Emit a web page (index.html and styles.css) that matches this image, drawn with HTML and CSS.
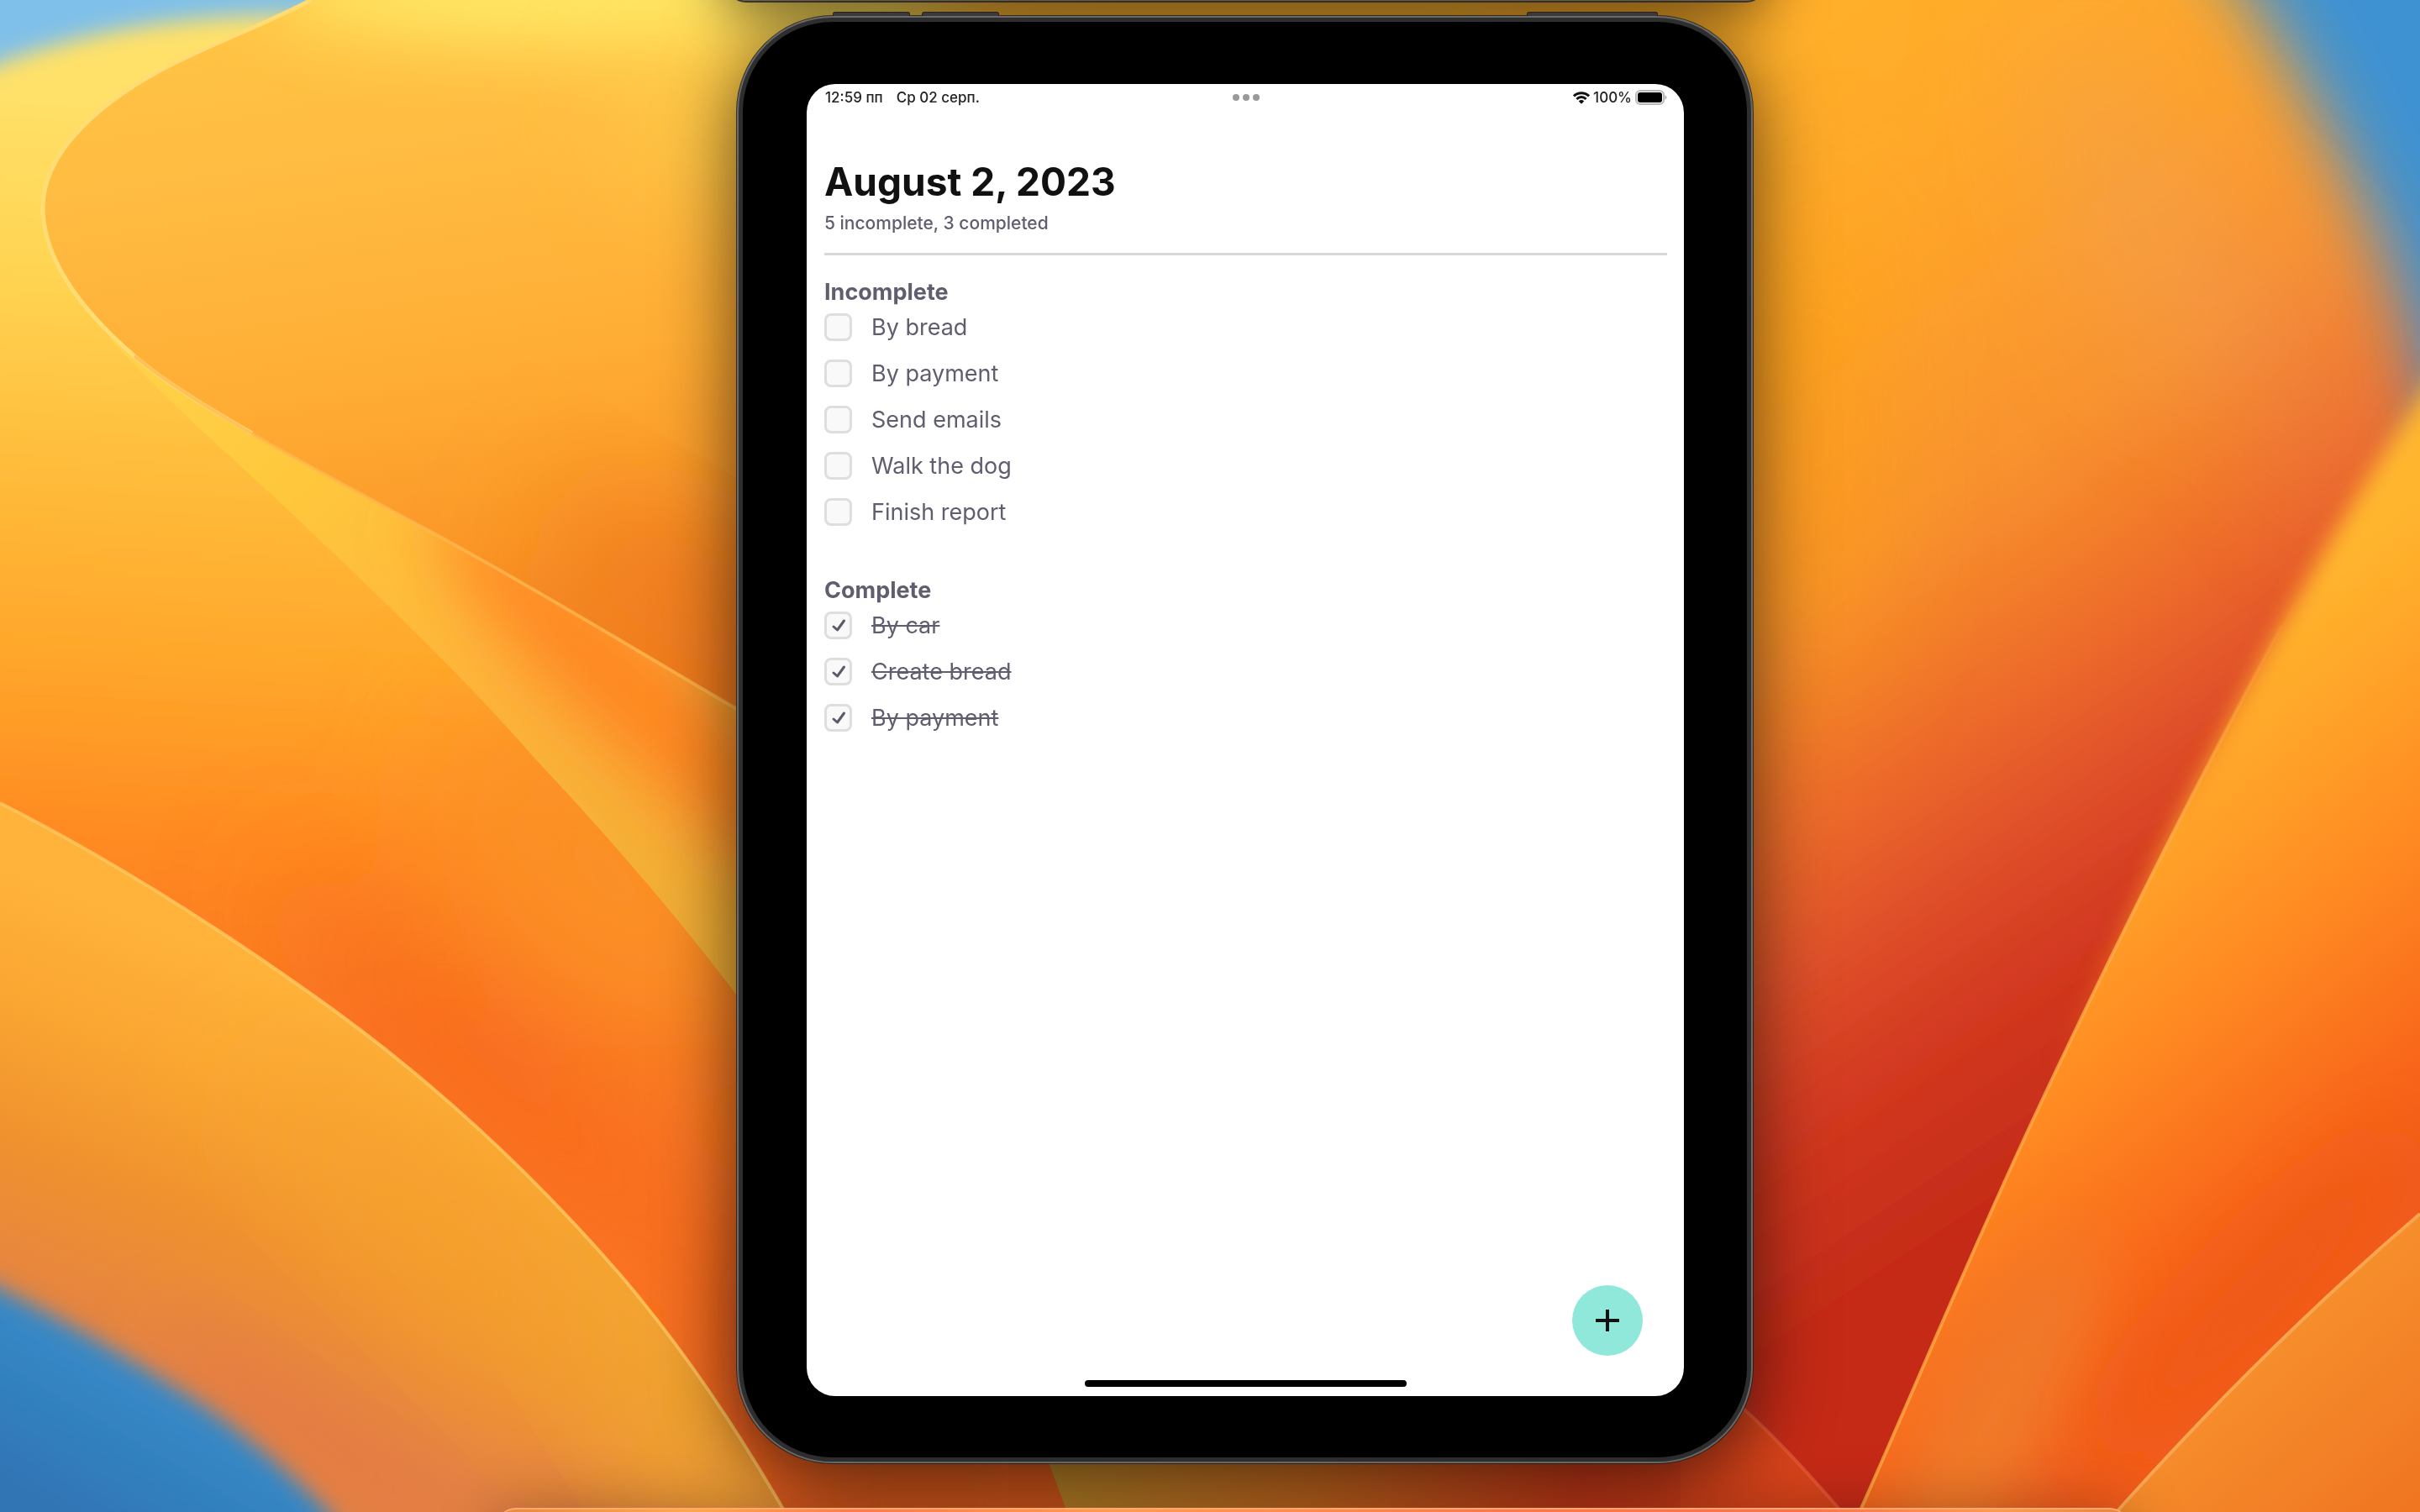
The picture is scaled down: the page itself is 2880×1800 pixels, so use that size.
FILE: index.html
```html
<!DOCTYPE html>
<html lang="en">
<head>
<meta charset="utf-8">
<title>August 2, 2023</title>
<link rel="stylesheet" href="styles.css">
</head>
<body>
<svg class="wallpaper" viewBox="0 0 2880 1800" preserveAspectRatio="none" aria-hidden="true">
  <defs>
    <filter id="b12" x="-20%" y="-20%" width="140%" height="140%"><feGaussianBlur stdDeviation="13"/></filter>
    <filter id="b40" x="-60%" y="-60%" width="220%" height="220%"><feGaussianBlur stdDeviation="42"/></filter>
    <filter id="b80" x="-60%" y="-60%" width="220%" height="220%"><feGaussianBlur stdDeviation="75"/></filter>
    <linearGradient id="gLeft" x1="0" y1="100" x2="-60" y2="1200" gradientUnits="userSpaceOnUse">
      <stop offset="0" stop-color="#ffe169"/><stop offset=".2" stop-color="#ffd452"/><stop offset=".42" stop-color="#ffbb3a"/>
      <stop offset=".62" stop-color="#ffa62a"/><stop offset=".8" stop-color="#ff8b22"/><stop offset="1" stop-color="#fa7823"/>
    </linearGradient>
    <linearGradient id="gInner" x1="420" y1="0" x2="560" y2="900" gradientUnits="userSpaceOnUse">
      <stop offset="0" stop-color="#ffc444"/><stop offset=".2" stop-color="#ffbc42"/><stop offset=".5" stop-color="#ffad34"/>
      <stop offset=".72" stop-color="#fb9828"/><stop offset=".95" stop-color="#f07c1e"/>
    </linearGradient>
    <linearGradient id="gWedge" x1="140" y1="400" x2="900" y2="1100" gradientUnits="userSpaceOnUse">
      <stop offset="0" stop-color="#ffd34c"/><stop offset=".25" stop-color="#ffc83c"/><stop offset=".6" stop-color="#fdb43c"/><stop offset="1" stop-color="#f0ac34"/>
    </linearGradient>
    <linearGradient id="gLow" x1="330" y1="1150" x2="150" y2="1620" gradientUnits="userSpaceOnUse">
      <stop offset="0" stop-color="#ffb33a"/><stop offset=".3" stop-color="#faa632"/><stop offset=".6" stop-color="#f0922e"/><stop offset="1" stop-color="#e48244"/>
    </linearGradient>
    <linearGradient id="gRight" x1="2100" y1="100" x2="2815" y2="1179" gradientUnits="userSpaceOnUse">
      <stop offset="0" stop-color="#ffaf2a"/><stop offset=".2" stop-color="#fea42c"/><stop offset=".42" stop-color="#f8922e"/>
      <stop offset=".56" stop-color="#f0722a"/><stop offset=".7" stop-color="#e0502a"/><stop offset=".82" stop-color="#d23820"/><stop offset=".97" stop-color="#c52c18"/>
    </linearGradient>
    <linearGradient id="gEast" x1="2470" y1="900" x2="2860" y2="1400" gradientUnits="userSpaceOnUse">
      <stop offset="0" stop-color="#ffb62e"/><stop offset=".2" stop-color="#ffa62a"/><stop offset=".5" stop-color="#ff8a22"/><stop offset=".85" stop-color="#f8661a"/><stop offset="1" stop-color="#f25c1c"/>
    </linearGradient>
    <linearGradient id="gSouthEast" x1="2650" y1="1560" x2="2850" y2="1800" gradientUnits="userSpaceOnUse">
      <stop offset="0" stop-color="#f8942e"/><stop offset="1" stop-color="#f07622"/>
    </linearGradient>
    <linearGradient id="gBottom" x1="1250" y1="0" x2="2150" y2="0" gradientUnits="userSpaceOnUse">
      <stop offset="0" stop-color="#c08828"/><stop offset=".35" stop-color="#cc6a1e"/><stop offset=".7" stop-color="#cc3a18"/><stop offset="1" stop-color="#d8431a"/>
    </linearGradient>
    <linearGradient id="gBlue" x1="200" y1="1560" x2="60" y2="1800" gradientUnits="userSpaceOnUse">
      <stop offset="0" stop-color="#4090cc"/><stop offset=".5" stop-color="#3484c2"/><stop offset="1" stop-color="#3074b4"/>
    </linearGradient>
    <linearGradient id="fadeIn" x1="0" y1="700" x2="0" y2="1000" gradientUnits="userSpaceOnUse">
      <stop offset="0" stop-color="#000"/><stop offset="1" stop-color="#fff"/>
    </linearGradient>
    <linearGradient id="fadeOut" x1="0" y1="1000" x2="0" y2="1280" gradientUnits="userSpaceOnUse">
      <stop offset="0" stop-color="#fff"/><stop offset="1" stop-color="#000"/>
    </linearGradient>
    <mask id="mIn" maskUnits="userSpaceOnUse" x="2000" y="0" width="900" height="1800"><rect x="2000" width="900" height="1800" fill="url(#fadeIn)"/></mask>
    <mask id="mOut" maskUnits="userSpaceOnUse" x="2000" y="0" width="900" height="1800"><rect x="2000" width="900" height="1800" fill="url(#fadeOut)"/></mask>
    <clipPath id="cInner"><path d="M370 0C310 32 250 52 190 84C110 128 51 185 51 247C51 310 100 372 160 424C240 490 390 566 520 637C650 708 770 782 877 844L1500 1200V0Z"/></clipPath>
    <clipPath id="cWedge"><path d="M51 247C51 310 100 372 160 424C240 490 390 566 520 637C650 708 770 782 877 844L1000 920V1350L877 1185C800 1083 720 992 634 900C560 815 470 728 392 654C310 573 220 500 135 408Z"/></clipPath>
    <clipPath id="cLow"><path d="M0 956C130 1022 250 1098 367 1181C500 1274 620 1382 735 1514C815 1607 880 1706 934 1800H0Z"/></clipPath>
    <clipPath id="cEast"><path d="M2960 355C2880 470 2800 590 2714 746C2600 960 2510 1140 2426 1319C2350 1480 2280 1650 2213 1800H2960Z"/></clipPath>
  </defs>
  <rect width="2880" height="1800" fill="#7fc0ea"/>
  <path d="M-80 110C80 30 250 10 440 20H1400V1900H-80Z" fill="url(#gLeft)" filter="url(#b12)"/>
  <g filter="url(#b80)">
    <ellipse cx="720" cy="1040" rx="230" ry="120" fill="#fb9028" transform="rotate(45 720 1040)"/>
    <ellipse cx="600" cy="1290" rx="360" ry="45" fill="#f8641e" transform="rotate(43 600 1290)"/>
    <ellipse cx="950" cy="1650" rx="90" ry="220" fill="#dc501c"/>
  </g>
  <g clip-path="url(#cWedge)">
    <rect width="1100" height="1400" fill="url(#gWedge)"/>
    <ellipse cx="800" cy="868" rx="380" ry="62" fill="#ff8420" filter="url(#b40)" transform="rotate(43 800 868)"/>
  </g>
  <rect x="1300" width="900" height="300" fill="#ffb42e"/>
  <g clip-path="url(#cInner)">
    <rect width="1500" height="1300" fill="url(#gInner)"/>
    <ellipse cx="780" cy="-10" rx="460" ry="66" fill="#ffe866" filter="url(#b40)"/>
    <ellipse cx="1000" cy="130" rx="260" ry="90" fill="#ffd44c" filter="url(#b80)" opacity=".8"/>
    <ellipse cx="1400" cy="20" rx="300" ry="90" fill="#ffb42e" filter="url(#b40)"/>
    <ellipse cx="830" cy="720" rx="200" ry="70" fill="#ee781c" filter="url(#b80)" transform="rotate(30 830 720)"/>
  </g>
  <path d="M370 0C310 32 250 52 190 84C110 128 51 185 51 247C51 310 100 372 160 424C190 450 240 482 300 516" fill="none" stroke="#ffdc74" stroke-width="5"/>
  <path d="M160 424C240 490 390 566 520 637C650 708 770 782 877 844" fill="none" stroke="#ffb850" stroke-width="4" opacity=".75"/>
  <path d="M960 1660H1240L1275 1900H960Z" fill="#dc5a1c" filter="url(#b40)"/>
  <path d="M1232 1700H2100V1900H1300L1270 1800Z" fill="url(#gBottom)"/>
  <rect x="2030" width="850" height="1700" fill="#3f92d2"/>
  <path d="M1800 -200H2530C2730 40 2840 260 2890 480L3000 900V1900H2060L1800 700Z" fill="url(#gRight)" filter="url(#b40)"/>
  <g filter="url(#b80)">
    <ellipse cx="2540" cy="240" rx="60" ry="240" fill="#f2a05c" transform="rotate(-22 2540 240)" opacity=".6"/>
    <ellipse cx="2740" cy="440" rx="24" ry="190" fill="#e87c62" transform="rotate(-18 2740 440)" opacity=".85"/>
    <ellipse cx="2160" cy="520" rx="50" ry="300" fill="#ffa01c" opacity=".5"/>
  </g>
  <path d="M2060 1664C2105 1702 2150 1752 2192 1800H2000V1664Z" fill="#d8431a"/>
  <path d="M1226 1730H2000V1800H1270Z" fill="url(#gBottom)"/>
  <path d="M1200 1730H1244L1270 1800H1200Z" fill="#dc5a1c"/>
  <path d="M2060 1664C2105 1702 2150 1752 2192 1800" fill="none" stroke="#e85c38" stroke-width="4" opacity=".7"/>
  <g mask="url(#mOut)">
    <path d="M2960 355C2880 470 2800 590 2714 746C2600 960 2510 1140 2426 1319L3200 1319V355Z" fill="url(#gEast)" filter="url(#b12)"/>
  </g>
  <g clip-path="url(#cEast)">
    <g mask="url(#mIn)">
      <rect x="2100" y="300" width="800" height="1500" fill="url(#gEast)"/>
      <ellipse cx="2370" cy="1690" rx="240" ry="70" fill="#f07a2a" filter="url(#b40)" transform="rotate(-64 2370 1690)"/>
      <ellipse cx="2690" cy="1540" rx="260" ry="60" fill="#f05a18" filter="url(#b40)" transform="rotate(-45 2690 1540)"/>
    </g>
  </g>
  <path mask="url(#mIn)" d="M2714 746C2600 960 2510 1140 2426 1319C2350 1480 2280 1650 2213 1800" fill="none" stroke="#ffb04a" stroke-width="4" opacity=".75"/>
  <path d="M2880 1445C2750 1556 2630 1675 2510 1810H2880Z" fill="url(#gSouthEast)"/>
  <path d="M2880 1445C2750 1556 2630 1675 2510 1810" fill="none" stroke="#f9a650" stroke-width="4"/>
  <g clip-path="url(#cLow)">
    <rect y="900" width="1000" height="900" fill="url(#gLow)"/>
    <ellipse cx="790" cy="1660" rx="260" ry="70" fill="#f0a830" filter="url(#b80)" transform="rotate(58 790 1660)"/>
    <ellipse cx="520" cy="1480" rx="280" ry="70" fill="#f5a02e" filter="url(#b80)" transform="rotate(45 520 1480)"/>
    <ellipse cx="390" cy="1720" rx="240" ry="36" fill="#e47a42" filter="url(#b40)" transform="rotate(36 390 1720)"/>
    <path d="M-60 1505C60 1560 160 1620 245 1675C310 1722 350 1758 400 1810L380 1900H-60Z" fill="url(#gBlue)" filter="url(#b12)"/>
  </g>
  <path d="M0 956C130 1022 250 1098 367 1181C500 1274 620 1382 735 1514C815 1607 880 1706 934 1800" fill="none" stroke="#ffc860" stroke-width="4" opacity=".8"/>
</svg>
<div class="desktop">
  <div class="upper-device"></div>
  <main class="tablet">
    <span class="key key-volume-up"></span><span class="key key-volume-down"></span><span class="key key-power"></span>
    <div class="screen">
      <header class="status">
        <div class="status-side"><span>12:59 пп</span><span>Ср 02 серп.</span></div>
        <div class="dots"><i></i><i></i><i></i></div>
        <div class="status-side status-end">
          <svg class="wifi" viewBox="0 0 20 15" aria-label="Wi-Fi"><g fill="none" stroke="#111" stroke-width="3"><path d="M1 5.4C6 .4 14 .4 19 5.4"/><path d="M4.4 9C7.6 5.8 12.4 5.8 15.6 9"/></g><path d="M6.8 11.4C8.7 9.6 11.3 9.6 13.2 11.4L10 14.8Z" fill="#111"/></svg>
          <span>100%</span>
          <svg class="battery" viewBox="0 0 38 18" aria-label="Battery full"><rect x="1" y="1" width="33" height="16" rx="5" fill="none" stroke="#b9b9b9" stroke-width="2"/><rect x="3" y="3" width="29" height="12" rx="3"/><path d="M35.500 6.500C38 7 38 11 35.500 11.500Z" fill="#aaa"/></svg>
        </div>
      </header>
      <div class="content">
        <h1>August 2, 2023</h1>
        <p class="summary">5 incomplete, 3 completed</p>
        <hr>
        <section>
          <h2>Incomplete</h2>
          <ul>
            <li><label><span class="box"><input type="checkbox"></span>By bread</label></li>
            <li><label><span class="box"><input type="checkbox"></span>By payment</label></li>
            <li><label><span class="box"><input type="checkbox"></span>Send emails</label></li>
            <li><label><span class="box"><input type="checkbox"></span>Walk the dog</label></li>
            <li><label><span class="box"><input type="checkbox"></span>Finish report</label></li>
          </ul>
        </section>
        <section>
          <h2>Complete</h2>
          <ul class="done">
            <li><label><span class="box"><input type="checkbox" checked><svg viewBox="0 0 33 33"><path d="M11 18L15.500 22L23.500 11"/></svg></span><s>By car</s></label></li>
            <li><label><span class="box"><input type="checkbox" checked><svg viewBox="0 0 33 33"><path d="M11 18L15.500 22L23.500 11"/></svg></span><s>Create bread</s></label></li>
            <li><label><span class="box"><input type="checkbox" checked><svg viewBox="0 0 33 33"><path d="M11 18L15.500 22L23.500 11"/></svg></span><s>By payment</s></label></li>
          </ul>
        </section>
      </div>
      <button class="add" type="button" aria-label="Add task"><svg viewBox="0 0 28 28"><path d="M14 1V27M0 14H28"/></svg></button>
      <div class="home-bar"></div>
    </div>
  </main>
  <div class="lower-window"></div>
</div>
</body>
</html>
```
FILE: styles.css
```css
* { box-sizing: border-box; }

body {
  margin: 0;
  font-family: "Inter", "Liberation Sans", sans-serif;
  color: #605e6e;
}

.wallpaper {
  position: absolute;
  inset: 0;
  width: 100%;
  height: 100%;
}

.desktop {
  position: relative;
  display: grid;
  grid-template-columns: 877fr 1209fr 794fr;
  align-items: start;
  min-height: 100vh;
  padding-top: 19px;
  overflow: hidden;
}

.upper-device {
  position: absolute;
  top: -200px;
  left: 30%;
  width: 43%;
  height: 203px;
  border-bottom: 2px solid #3a3632;
  border-radius: 0 0 24px 24px;
  background: #77674a;
  box-shadow: 0 10px 70px rgba(0, 0, 0, .6);
}

.tablet {
  position: relative;
  grid-column: 2;
  padding: 74px 75px 73px 76px;
  border: 7px solid #2e2e2e;
  border-radius: 114px;
  background: #000;
  box-shadow: 0 0 0 1px rgba(30, 26, 22, .8), 0 20px 90px rgba(0, 0, 0, .65);
}

.tablet::before {
  content: "";
  position: absolute;
  inset: -7px;
  border: 2px solid #68686a;
  border-radius: 114px;
}

.key {
  position: absolute;
  top: -12px;
  width: 92px;
  height: 5px;
  border: 1px solid #2a2016;
  border-bottom: 0;
  border-radius: 3px 3px 0 0;
  background: #3a3a3c;
}

.key-volume-up { left: 107px; }
.key-volume-down { left: 213px; }
.key-power { right: 106px; width: 156px; }

.screen {
  position: relative;
  display: flex;
  flex-direction: column;
  aspect-ratio: 1044 / 1562;
  border-radius: 34px;
  background: #fff;
}

.status {
  display: grid;
  grid-template-columns: 1fr auto 1fr;
  align-items: center;
  height: 32px;
  padding: 0 20px 0 22px;
  font-size: 17px;
  font-weight: 500;
  color: #222;
}

.status-side {
  display: flex;
  align-items: center;
  gap: 16px;
}

.status-end {
  justify-content: flex-end;
  gap: 4px;
}

.wifi { width: 20px; height: 15px; }
.battery { width: 38px; height: 18px; }

.dots { display: flex; gap: 4px; }

.dots i {
  width: 8px;
  height: 8px;
  border-radius: 50%;
  background: #999;
}

.content { padding: 56px 20px 0 21px; }

h1 {
  margin: 0 0 8px;
  font-size: 46px;
  line-height: 56px;
  font-weight: 700;
  color: #111;
}

.summary {
  margin: 0;
  font-size: 21px;
  line-height: 28px;
  font-weight: 500;
}

hr {
  height: 3px;
  margin: 21px 0 28px;
  border: 0;
  background: #d8d8d8;
}

section + section { margin-top: 61px; }

h2 {
  margin: 0 0 9px;
  font-size: 27px;
  line-height: 32px;
  font-weight: 700;
}

ul {
  display: grid;
  gap: 22px;
  margin: 0;
  padding: 0;
  list-style: none;
}

li { height: 33px; }

label {
  display: inline-flex;
  align-items: center;
  gap: 23px;
  font-size: 27px;
  line-height: 33px;
  font-weight: 400;
}

s { text-decoration-thickness: 2px; }

.box { display: grid; }

.box > * { grid-area: 1 / 1; }

input {
  appearance: none;
  width: 33px;
  height: 33px;
  margin: 0;
  border: 3px solid #dedede;
  border-radius: 8px;
  background: #f9f9f9;
}

.box svg {
  width: 33px;
  height: 33px;
  fill: none;
  stroke: #5b596a;
  stroke-width: 3;
  stroke-linecap: round;
  stroke-linejoin: round;
}

.add {
  position: absolute;
  right: 49px;
  bottom: 48px;
  display: grid;
  place-items: center;
  width: 84px;
  height: 84px;
  padding: 0;
  border: 0;
  border-radius: 50%;
  background: #90e8da;
}

.add svg {
  width: 28px;
  height: 28px;
  stroke: #111;
  stroke-width: 4;
}

.home-bar {
  width: 383px;
  height: 8px;
  margin: auto auto 11px;
  border-radius: 4px;
  background: #000;
}

.lower-window {
  position: absolute;
  bottom: -100px;
  left: 20.5%;
  width: 67.5%;
  height: 105px;
  border-top: 2px solid #ffa874;
  border-radius: 24px;
  background: linear-gradient(90deg, #e68a3c, #ffa848 12%, #ff7a48 22%, #ff9c4a 38%, #ff7648 62%, #ff7048 80%, #ff9a4c 92%, #e8843a);
  box-shadow: 0 0 70px rgba(0, 0, 0, .28);
}
```
